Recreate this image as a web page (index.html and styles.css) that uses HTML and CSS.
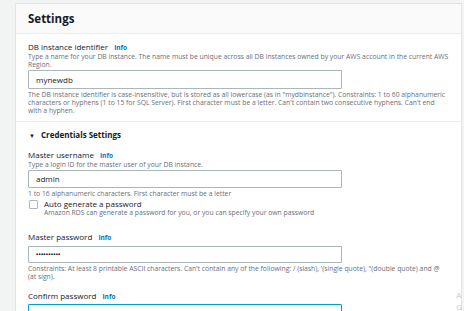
FILE: index.html
```html
<!DOCTYPE html>
<html lang="en">
<head>
    <meta charset="UTF-8">
    <meta name="viewport" content="width=device-width, initial-scale=1.0">
    <title>Settings</title>
    <link rel="stylesheet" href="styles.css">
</head>
<body>
    <div class="page">
      <div class="card">
        <div class="card-header">Settings</div>
        <div class="card-body">
          <div class="field first">
            <div class="label">DB instance identifier <span class="info">Info</span></div>
            <div class="desc">Type a name for your DB instance. The name must be unique across all DB instances owned by your AWS account in the current AWS<br>Region.</div>
            <div class="input">mynewdb</div>
            <div class="help">The DB instance identifier is case-insensitive, but is stored as all lowercase (as in "mydbinstance"). Constraints: 1 to 60 alphanumeric<br>characters or hyphens (1 to 15 for SQL Server). First character must be a letter. Can't contain two consecutive hyphens. Can't end<br>with a hyphen.</div>
          </div>
          <div class="section">
            <div class="section-title"><span class="caret">&#9660;</span>Credentials Settings</div>
            <div class="field">
              <div class="label">Master username <span class="info">Info</span></div>
              <div class="desc">Type a login ID for the master user of your DB instance.</div>
              <div class="input short">admin</div>
              <div class="help">1 to 16 alphanumeric characters. First character must be a letter</div>
            </div>
            <div class="check">
              <div class="box"></div>
              <div>
                <div class="check-label">Auto generate a password</div>
                <div class="desc">Amazon RDS can generate a password for you, or you can specify your own password</div>
              </div>
            </div>
            <div class="field pw">
              <div class="label">Master password <span class="info">Info</span></div>
              <div class="input dots">&#8226;&#8226;&#8226;&#8226;&#8226;&#8226;&#8226;&#8226;&#8226;&#8226;</div>
              <div class="help">Constraints: At least 8 printable ASCII characters. Can't contain any of the following: / (slash), '(single quote), "(double quote) and @<br>(at sign).</div>
            </div>
            <div class="field confirm">
              <div class="label">Confirm password <span class="info">Info</span></div>
              <div class="input focus"></div>
            </div>
          </div>
        </div>
      </div>
      <div class="watermark">A<br>G</div>
    </div>
</body>
</html>
```

FILE: styles.css
```css
body {
  margin: 0;
  background: #f2f3f3;
  font-family: "Open Sans", "Noto Sans", sans-serif;
  color: #16191f;
  overflow: hidden;
}
.page {
  position: relative;
  padding: 3px 2px 0 15px;
  height: 311px;
  box-sizing: border-box;
  overflow: hidden;
}
.card {
  background: #fff;
  border: 1px solid #e1e4e5;
  height: 400px;
}
.card-header {
  background: #fafafa;
  border-bottom: 1px solid #eaeded;
  height: 29px;
  line-height: 29px;
  padding-left: 12px;
  font-size: 11.5px;
  font-weight: 700;
}
.card-body {
  padding: 0 0 0 12px;
}
.field.first {
  padding-top: 8px;
  padding-bottom: 6px;
  border-bottom: 1px solid #eaeded;
  margin-left: -12px;
  padding-left: 12px;
}
.label {
  font-size: 8px;
  line-height: 10px;
  height: 10px;
}
.info {
  color: #0073bb;
  font-weight: 700;
  font-size: 6.5px;
  margin-left: 4px;
}
.desc, .help {
  font-size: 6.8px;
  line-height: 8px;
  color: #687078;
  white-space: nowrap;
}
.desc {
  margin-top: 1px;
}
.input {
  width: 314px;
  height: 19px;
  box-sizing: border-box;
  border: 1px solid #aab7b8;
  border-radius: 1px;
  margin-top: 1px;
  padding-left: 7px;
  font-size: 8px;
  line-height: 17px;
}
.input.short {
  height: 18px;
  line-height: 16px;
}
.section-title {
  font-size: 8px;
  font-weight: 700;
  line-height: 10px;
  margin-top: 8px;
}
.caret {
  font-size: 6px;
  margin: 0 6px 0 1px;
}
.section .field {
  margin-top: 9px;
}
.check {
  display: flex;
  margin-top: 1px;
}
.box {
  width: 7px;
  height: 7px;
  border: 1px solid #aab7b8;
  border-radius: 1px;
  margin: 1px 6px 0 1px;
}
.check-label {
  font-size: 8px;
  line-height: 10px;
}
.check .desc {
  margin-top: 0;
}
.field.pw {
  margin-top: 15px;
}
.pw .input {
  margin-top: 4px;
  height: 17px;
  line-height: 14px;
  font-size: 6px;
  font-weight: 700;
  letter-spacing: 0.2px;
}
.help {
  margin-top: 2px;
}
.field.confirm {
  margin-top: 10px;
}
.input.focus {
  border: 1.5px solid #00a1c9;
  margin-top: 3px;
}
.watermark {
  position: absolute;
  right: 2px;
  top: 289px;
  font-size: 8px;
  line-height: 12px;
  color: #c4c6c8;
}
```
